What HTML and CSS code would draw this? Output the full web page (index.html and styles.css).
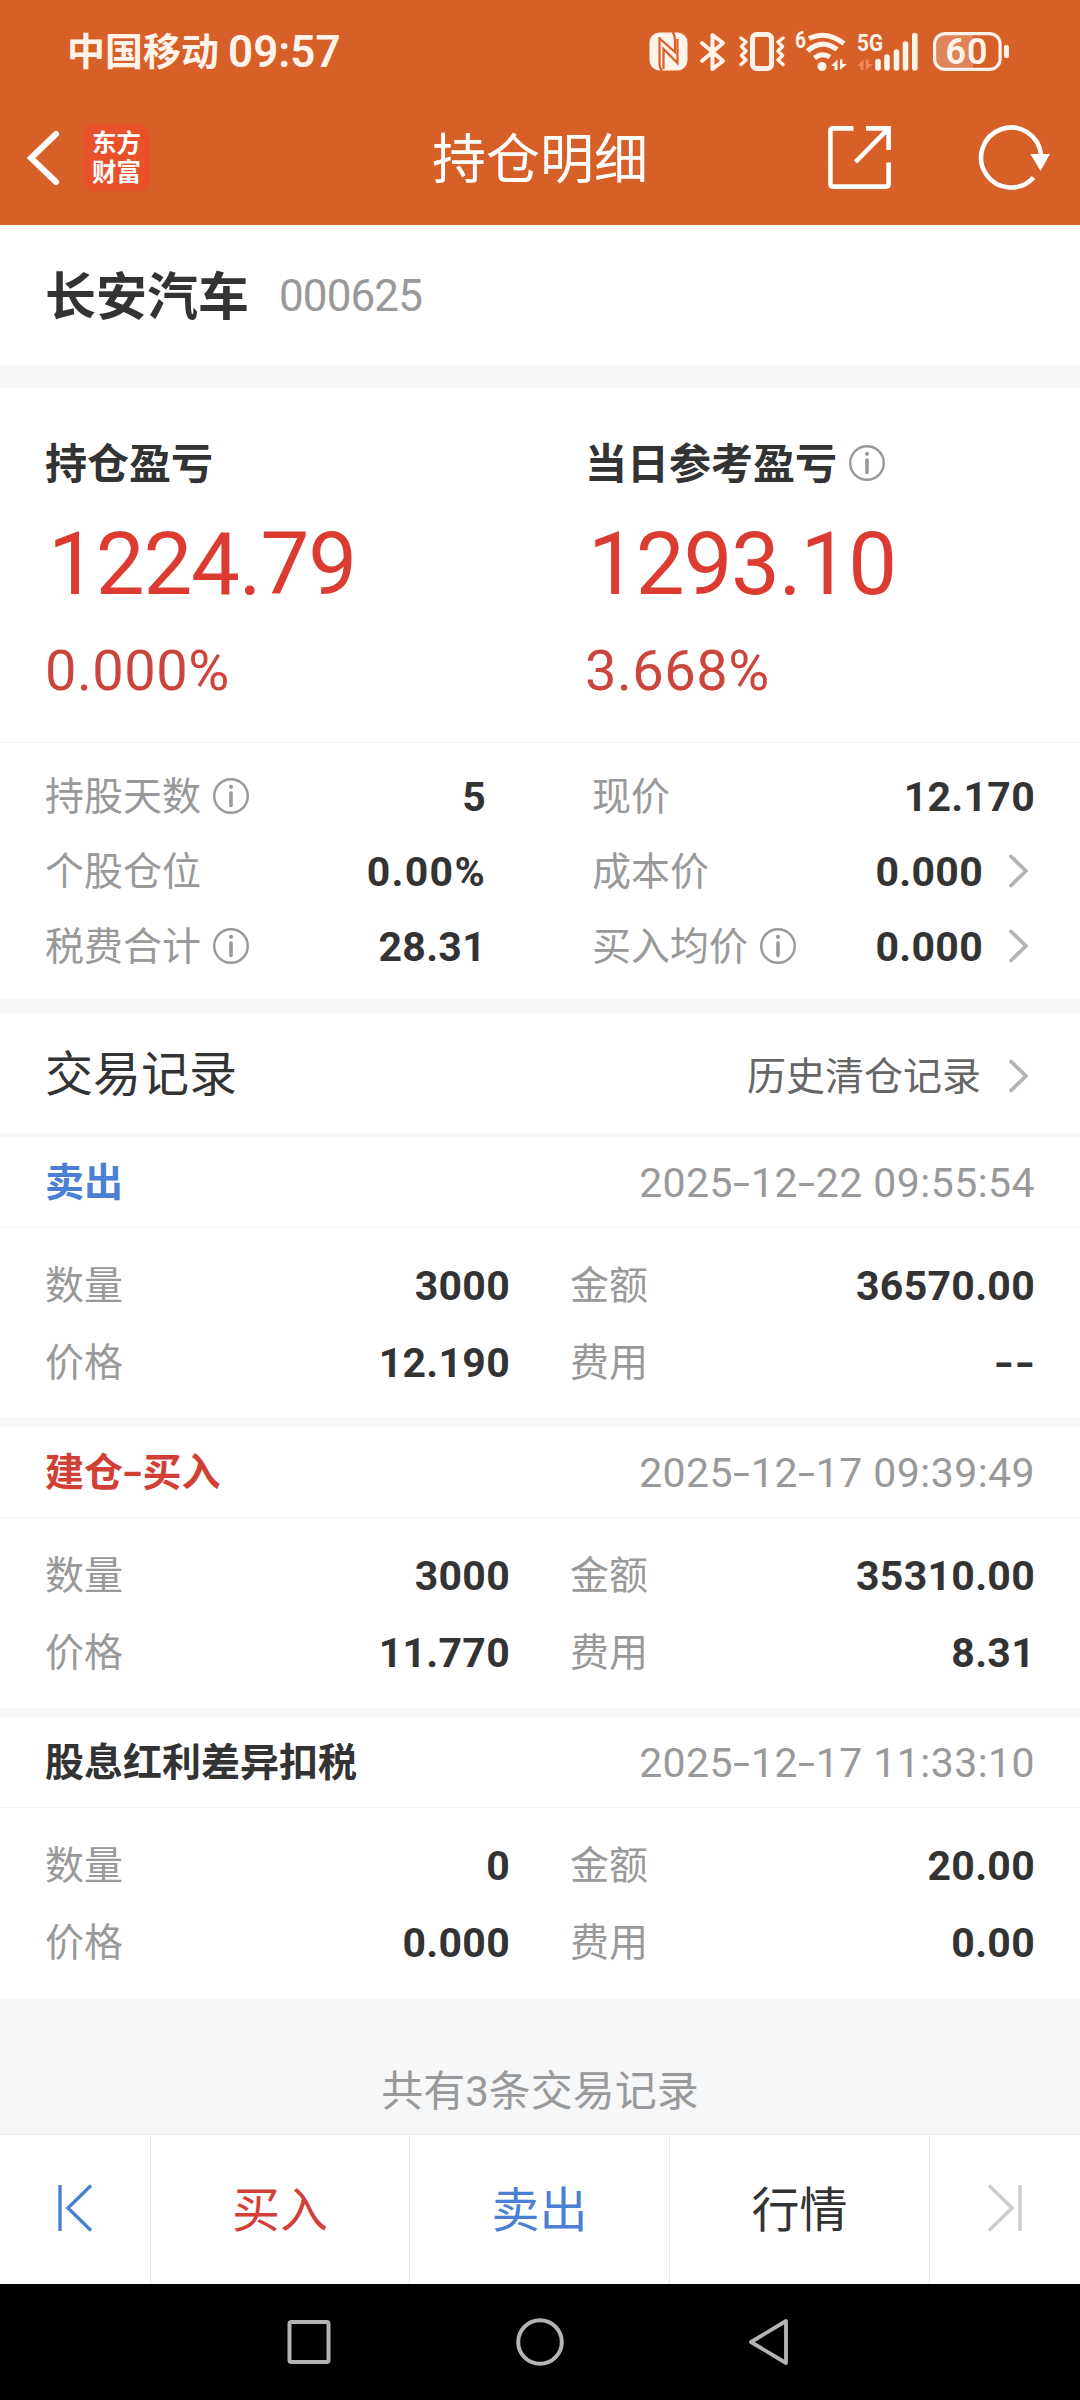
FILE: index.html
```html
<!DOCTYPE html>
<html lang="zh-CN">
<head>
    <meta charset="UTF-8">
    <meta name="viewport" content="width=device-width, initial-scale=1.0">
    <title>持仓明细</title>
    <link rel="stylesheet" href="styles.css">
</head>
<body>
    <svg width="0" height="0" class="defs">
        <symbol id="info" viewBox="0 0 36 36">
            <circle cx="18" cy="18" r="16.8" fill="none" stroke="#999" stroke-width="2.4"/>
            <circle cx="18" cy="8.8" r="2.1" fill="#999"/>
            <path d="M18 15v12.5" stroke="#999" stroke-width="3.6" stroke-linecap="round"/>
        </symbol>
        <symbol id="arrow" viewBox="0 0 19 34">
            <path d="M2 2.5L17 17L2 31.5" fill="none" stroke="#b3b3b3" stroke-width="3.8" stroke-linecap="round" stroke-linejoin="round"/>
        </symbol>
    </svg>

    <header class="header">
        <div class="status">
            <span class="carrier">中国移动</span>
            <span class="time">09:57</span>
            <div class="status-icons">
                <!-- NFC -->
                <svg width="39" height="39" viewBox="0 0 39 39">
                    <rect x="0.5" y="0.5" width="38" height="38" rx="10" fill="#fff3ea"/>
                    <path d="M10.500 5V32Q10.500 36 13 39M10 6L26 20V9Q26 3 23.500 0M14.500 37V17L28.500 31V7" fill="none" stroke="#d75f28" stroke-width="2.200"/>
                </svg>
                <!-- Bluetooth -->
                <svg class="ic-bt" width="26" height="38" viewBox="0 0 26 38">
                    <path d="M2 10L23 28L12.500 36V2L23 10L2 28" fill="none" stroke="#fff3ea" stroke-width="4" stroke-linejoin="round" stroke-linecap="round"/>
                </svg>
                <!-- Vibrate -->
                <svg class="ic-vib" width="46" height="39" viewBox="0 0 46 39">
                    <rect x="13.500" y="2.500" width="19" height="34" rx="4" fill="none" stroke="#fff3ea" stroke-width="5"/>
                    <path d="M2 6L7 10L2.500 14.500L7 19L2.500 23.500L7 28L2 32.500M44 6L39 10L43.500 14.500L39 19L43.500 23.500L39 28L44 32.500" fill="none" stroke="#fff3ea" stroke-width="3.400" stroke-linejoin="round" stroke-linecap="round"/>
                </svg>
                <!-- Wi-Fi -->
                <svg class="ic-wifi" width="52" height="40" viewBox="0 0 52 40">
                    <text x="0" y="16" class="tiny" textLength="11" lengthAdjust="spacingAndGlyphs">6</text>
                    <path d="M14 6.500Q31 -2 49 11.500M12.500 19Q27 6 42 17.500M19.500 26Q27 20 35 25" fill="none" stroke="#fff3ea" stroke-width="5"/>
                    <circle cx="27" cy="34.500" r="4.500" fill="#fff3ea"/>
                    <path d="M36 34L42.500 27.500V38H39.500V34ZM45 27.500H47.500V32H52L45 38Z" fill="#fff3ea"/>
                </svg>
                <!-- 5G signal -->
                <svg class="ic-5g" width="62" height="40" viewBox="0 0 62 40">
                    <text x="0" y="19" class="tiny" textLength="26" lengthAdjust="spacingAndGlyphs">5G</text>
                    <path d="M0 34L6.500 27.500V38H3.500V34ZM9 27.500H11.500V32H16L9 38Z" fill="#f08a5e"/>
                    <path d="M21 29.500V36M30 25V36M39.500 20V36M48.500 12V36M57.800 3.500V36" fill="none" stroke="#fff3ea" stroke-width="5.600" stroke-linecap="round"/>
                </svg>
                <!-- Battery -->
                <svg class="ic-bat" width="77" height="39" viewBox="0 0 77 39">
                    <path d="M12 2H40V36.500H12Q2 36.500 2 28V11Q2 2 12 2Z" fill="#df8559"/>
                    <rect x="1.600" y="1.600" width="65.500" height="35.800" rx="10.500" fill="none" stroke="#fff3ea" stroke-width="3.200"/>
                    <rect x="71" y="13" width="5" height="13" rx="2" fill="#fff3ea"/>
                    <text x="34" y="32" class="pct" text-anchor="middle">60</text>
                </svg>
            </div>
        </div>
        <div class="nav">
            <div class="nav-left">
                <svg width="34" height="56" viewBox="0 0 34 56">
                    <path d="M30 4L5 28L30 52" fill="none" stroke="#fff" stroke-width="6" stroke-linecap="round"/>
                </svg>
                <div class="logo">东方<br>财富</div>
            </div>
            <h1>持仓明细</h1>
            <div class="nav-right">
                <svg width="63" height="63" viewBox="0 0 63 63">
                    <path d="M25.500 2.400H5Q2.400 2.400 2.400 5V58Q2.400 60.600 5 60.600H58Q60.600 60.600 60.600 58V36.500M38 2.400H60.600V24M60.600 2.400L27.500 36" fill="none" stroke="#fff" stroke-width="4.600"/>
                </svg>
                <svg class="reload" width="72" height="64" viewBox="0 0 72 64">
                    <path d="M54.500 51.500A30 30 0 1 1 62 29" fill="none" stroke="#fff" stroke-width="4.600"/>
                    <path d="M51.500 28H71L61.500 45Z" fill="#fff"/>
                </svg>
            </div>
        </div>
    </header>

    <section class="stock">
        <span class="stock-name">长安汽车</span>
        <span class="stock-code">000625</span>
    </section>

    <section class="profit">
        <div class="profit-item">
            <div class="profit-title">持仓盈亏</div>
            <div class="profit-num">1224.79</div>
            <div class="profit-rate">0.000%</div>
        </div>
        <div class="profit-item">
            <div class="profit-title">当日参考盈亏<svg class="info"><use href="#info"/></svg></div>
            <div class="profit-num">1293.10</div>
            <div class="profit-rate">3.668%</div>
        </div>
    </section>

    <section class="stats">
        <div class="stat">持股天数<svg class="info"><use href="#info"/></svg><b>5</b></div>
        <div class="stat">现价<b>12.170</b></div>
        <div class="stat">个股仓位<b class="percent">0.00%</b></div>
        <div class="stat">成本价<b>0.000</b><svg class="arrow"><use href="#arrow"/></svg></div>
        <div class="stat">税费合计<svg class="info"><use href="#info"/></svg><b>28.31</b></div>
        <div class="stat">买入均价<svg class="info"><use href="#info"/></svg><b>0.000</b><svg class="arrow"><use href="#arrow"/></svg></div>
    </section>

    <section class="records-head">
        <h2>交易记录</h2>
        <a class="history">历史清仓记录<svg class="arrow"><use href="#arrow"/></svg></a>
    </section>

    <section class="record">
        <div class="record-head">
            <span class="type blue">卖出</span>
            <span class="date">2025<i>-</i>12<i>-</i>22 09:55:54</span>
        </div>
        <div class="record-body">
            <div class="cell">数量<b>3000</b></div>
            <div class="cell">金额<b>36570.00</b></div>
            <div class="cell">价格<b>12.190</b></div>
            <div class="cell">费用<b class="empty"><i>-</i><i>-</i></b></div>
        </div>
    </section>

    <section class="record">
        <div class="record-head">
            <span class="type red">建仓<i>-</i>买入</span>
            <span class="date">2025<i>-</i>12<i>-</i>17 09:39:49</span>
        </div>
        <div class="record-body">
            <div class="cell">数量<b>3000</b></div>
            <div class="cell">金额<b>35310.00</b></div>
            <div class="cell">价格<b>11.770</b></div>
            <div class="cell">费用<b>8.31</b></div>
        </div>
    </section>

    <section class="record">
        <div class="record-head">
            <span class="type">股息红利差异扣税</span>
            <span class="date">2025<i>-</i>12<i>-</i>17 11:33:10</span>
        </div>
        <div class="record-body">
            <div class="cell">数量<b>0</b></div>
            <div class="cell">金额<b>20.00</b></div>
            <div class="cell">价格<b>0.000</b></div>
            <div class="cell">费用<b>0.00</b></div>
        </div>
    </section>

    <div class="total">共有3条交易记录</div>

    <div class="tabs">
        <a class="tab">
            <svg width="36" height="48" viewBox="0 0 36 48">
                <path d="M3 1V47M34 1.500L11 24L34 46.500" fill="none" stroke="#4a7fd4" stroke-width="3.400"/>
            </svg>
        </a>
        <a class="tab red">买入</a>
        <a class="tab blue">卖出</a>
        <a class="tab">行情</a>
        <a class="tab">
            <svg width="36" height="48" viewBox="0 0 36 48">
                <path d="M33 1V47M2 1.500L25 24L2 46.500" fill="none" stroke="#ccc" stroke-width="3.400"/>
            </svg>
        </a>
    </div>

    <div class="sysbar">
        <svg width="48" height="50" viewBox="0 0 48 50">
            <rect x="4.500" y="5" width="39" height="40" rx="2" fill="none" stroke="#b4b4b4" stroke-width="4"/>
        </svg>
        <svg width="48" height="50" viewBox="0 0 48 50">
            <circle cx="24" cy="25" r="21.800" fill="none" stroke="#b4b4b4" stroke-width="4"/>
        </svg>
        <svg width="48" height="50" viewBox="0 0 48 50">
            <path d="M4 25L39 4V46Z" fill="none" stroke="#b4b4b4" stroke-width="3.800" stroke-linejoin="round"/>
        </svg>
    </div>
</body>
</html>
```

FILE: styles.css
```css
* { box-sizing: border-box; }
body { margin: 0; width: 1080px; height: 2400px; background: #f6f7f9; color: #333; font-family: Roboto, "Noto Sans CJK SC", sans-serif; font-size: 39px; line-height: 1.2; }
svg { display: block; flex: none; overflow: visible; }
i { display: inline-block; margin: 0 3px; font-style: normal; transform: scaleX(1.5); }
.defs { position: absolute; }
h1, h2 { margin: 0; font-weight: 400; }
.red { color: #d23f37; }
.blue { color: #4a7fd4; }

/* Cabecera */
.header { height: 225px; background: #d75f28; color: #fff; }
.status { display: flex; align-items: center; height: 90px; padding: 13px 70px 0 67px; color: #fff3ea; }
.carrier { padding-top: 2px; font-size: 38px; font-weight: 700; }
.time { padding-top: 2px; margin-left: 9px; font-size: 44px; font-weight: 600; }
.status-icons { display: flex; align-items: center; margin-left: auto; }
.ic-bt { margin-left: 12px; }
.ic-vib { margin-left: 13px; }
.ic-wifi { margin-left: 10px; }
.ic-5g { margin-left: 10px; }
.ic-bat { margin-left: 14px; }
.tiny { font-size: 24px; font-weight: 700; fill: #fff3ea; }
.pct { font-size: 36px; font-weight: 600; fill: #fff3ea; letter-spacing: 1px; }
.nav { display: flex; align-items: center; height: 135px; padding: 0 29px 0 26px; }
.nav-left, .nav-right { display: flex; align-items: center; flex: 1; }
.nav-right { justify-content: flex-end; }
.nav h1 { padding: 7px 0 0 3px; font-size: 54px; }
.reload { margin-left: 88px; }
.logo { width: 67px; height: 67px; margin-left: 23px; padding-top: 5px; border-radius: 12px; background: #e9512a; font-size: 24.500px; font-weight: 700; line-height: 29px; text-align: center; }

/* Acción */
.stock { display: flex; align-items: center; height: 140px; padding: 0 45px; background: #fff; }
.stock-name { padding-top: 6px; font-size: 51px; font-weight: 700; }
.stock-code { padding-top: 2px; margin-left: 30px; font-size: 44px; color: #999; letter-spacing: -0.900px; }

.profit { display: grid; grid-template-columns: 540px 540px; height: 354px; margin-top: 23px; padding: 51px 0 0 45px; background: #fff; }
.profit-title { display: flex; align-items: center; height: 52px; font-size: 42px; font-weight: 700; }
.profit-title .info { margin-top: -4px; }
.profit-num { margin: 21px 0 0 3px; font-size: 87px; line-height: 104px; color: #dc3b32; letter-spacing: -1.200px; }
.profit-rate { margin-top: 21px; font-size: 56px; line-height: 68px; color: #cd443d; letter-spacing: 0.500px; }
.info { width: 36px; height: 36px; margin: -3px 0 0 12px; }
.arrow { width: 19px; height: 34px; margin: -3px 7px 0 26px; }

.stats { display: grid; grid-template-columns: 441px 443px; column-gap: 106px; grid-auto-rows: 75px; height: 256px; padding: 17px 45px 0; border-top: 1px solid #f1f1f3; background: #fff; color: #999; }
.stat, .cell { display: flex; align-items: center; }
.stat b, .cell b { margin: 0 0 0 auto; font-size: 41px; font-weight: 700; color: #333; letter-spacing: 0.300px; }
.stat b.percent { letter-spacing: 1.300px; }

/* Registros */
.records-head { display: flex; align-items: center; justify-content: space-between; height: 124px; margin-top: 15px; padding: 0 45px; border-bottom: 4px solid #f5f7f8; background: #fff; }
.records-head h2 { padding-top: 4px; font-size: 48px; }
.history { display: flex; align-items: center; padding-top: 9px; color: #666; }
.history .arrow { margin-left: 28px; }
.record { height: 281px; margin-bottom: 9px; background: #fff; }
.record-head { display: flex; align-items: center; justify-content: space-between; height: 91px; padding: 3px 45px 0; border-bottom: 1px solid #f3f4f6; }
.type { font-weight: 700; }
.type i { margin: 0 2px; }
.date { font-size: 41px; color: #999; letter-spacing: 0.450px; }
.record-body { display: grid; grid-template-columns: 465px 465px; column-gap: 60px; grid-auto-rows: 77px; padding: 20px 45px 0; color: #999; }
.cell b.empty i { margin: 0 2px; transform: scaleX(1.300); }

.total { height: 127px; padding-top: 60px; text-align: center; font-size: 42px; color: #999; }

/* Barra inferior */
.tabs { display: grid; grid-template-columns: 151px 259px 260px 260px 150px; height: 150px; border-top: 1px solid #ebedf0; background: #fff; }
.tab { display: flex; align-items: center; justify-content: center; padding-top: 2px; border-right: 1px solid #ebebeb; font-size: 48px; }
.tab:last-child { border-right: none; }
.tab svg { margin-top: -6px; }
.sysbar { display: flex; align-items: center; justify-content: center; gap: 183px; height: 116px; background: #000; }
```
